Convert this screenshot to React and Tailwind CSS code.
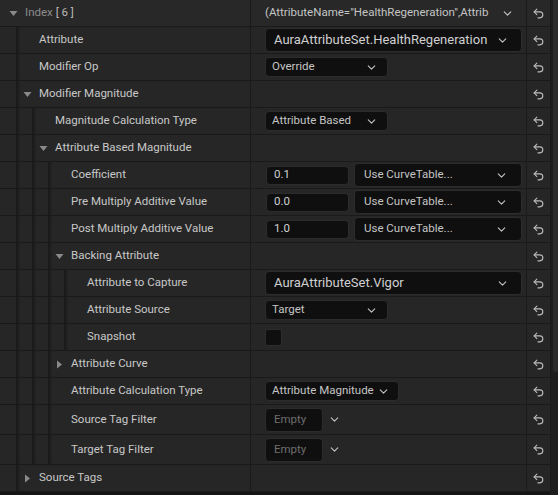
import React from 'react';
import { ChevronDown, Undo2 } from 'lucide-react';

const font = { fontFamily: 'Roboto, "Noto Sans", sans-serif' };

const rows = [
  { level: 0, label: 'Index', expand: 'down', value: 'struct', top: true },
  { level: 1, label: 'Attribute', value: 'bigcombo', text: 'AuraAttributeSet.HealthRegeneration' },
  { level: 1, label: 'Modifier Op', value: 'combo', text: 'Override' },
  { level: 1, label: 'Modifier Magnitude', expand: 'down' },
  { level: 2, label: 'Magnitude Calculation Type', value: 'combo', text: 'Attribute Based' },
  { level: 2, label: 'Attribute Based Magnitude', expand: 'down' },
  { level: 3, label: 'Coefficient', value: 'curve', text: '0.1' },
  { level: 3, label: 'Pre Multiply Additive Value', value: 'curve', text: '0.0' },
  { level: 3, label: 'Post Multiply Additive Value', value: 'curve', text: '1.0' },
  { level: 3, label: 'Backing Attribute', expand: 'down' },
  { level: 4, label: 'Attribute to Capture', value: 'bigcombo', text: 'AuraAttributeSet.Vigor' },
  { level: 4, label: 'Attribute Source', value: 'combo', text: 'Target' },
  { level: 4, label: 'Snapshot', value: 'check' },
  { level: 3, label: 'Attribute Curve', expand: 'right' },
  { level: 3, label: 'Attribute Calculation Type', value: 'combo', text: 'Attribute Magnitude', wide: true },
  { level: 3, label: 'Source Tag Filter', value: 'tags', tall: true },
  { level: 3, label: 'Target Tag Filter', value: 'tags', tall: true },
  { level: 1, label: 'Source Tags', expand: 'right' },
];

const Triangle = ({ dir }) => (
  <svg width="9" height="9" viewBox="0 0 9 9" className="shrink-0">
    {dir === 'down' ? (
      <polygon points="0.5,2 8.5,2 4.5,7" fill="#8a8a8a" />
    ) : (
      <polygon points="2,0.5 7,4.5 2,8.5" fill="#8a8a8a" />
    )}
  </svg>
);

const Combo = ({ text, w, h = 'h-[20px]', pad = 'pl-[6px] pr-[9px]', gap }) => (
  <div
    className={`flex items-center ${w} ${h} ${pad} rounded-[4px] border border-[#2c2c2c] bg-[#0f0f0f] text-[11.5px] text-[#c4c4c4]`}
  >
    <span className={gap ? 'mr-[3px] whitespace-nowrap' : 'flex-1 truncate'}>{text}</span>
    <ChevronDown size={13} strokeWidth={2} color="#c4c4c4" className="shrink-0" />
  </div>
);

const Value = ({ row }) => {
  switch (row.value) {
    case 'struct':
      return (
        <div className="flex flex-1 items-center pr-[12px] text-[11.5px] text-[#c4c4c4]">
          <span className="whitespace-nowrap">(AttributeName="HealthRegeneration",Attrib</span>
          <span className="flex-1" />
          <ChevronDown size={13} strokeWidth={2} color="#c4c4c4" />
        </div>
      );
    case 'bigcombo':
      return (
        <div className="flex h-[24px] w-[257px] items-center rounded-[4px] border border-[#2c2c2c] bg-[#0f0f0f] pl-[8px] pr-[12px] text-[13px] text-[#d0d0d0]">
          <span className="flex-1 truncate">{row.text}</span>
          <ChevronDown size={13} strokeWidth={2} color="#c4c4c4" />
        </div>
      );
    case 'combo':
      return row.wide ? (
        <Combo text={row.text} w="w-[134px]" gap />
      ) : (
        <Combo text={row.text} w="w-[123px]" />
      );
    case 'curve':
      return (
        <div className="flex items-center gap-[5px]">
          <div className="ml-[1px] flex h-[19px] w-[83px] items-center rounded-[4px] border border-[#2c2c2c] bg-[#0f0f0f] pl-[7px] text-[11.5px] text-[#d0d0d0]">
            {row.text}
          </div>
          <Combo text="Use CurveTable..." w="w-[168px]" h="h-[24px]" pad="pl-[9px] pr-[13px]" />
        </div>
      );
    case 'check':
      return <div className="h-[17px] w-[17px] rounded-[3px] border border-[#2c2c2c] bg-[#0f0f0f]" />;
    case 'tags':
      return (
        <div className="flex items-center gap-[5px]">
          <div className="flex h-[24px] w-[58px] items-center rounded-[4px] border border-[#2c2c2c] bg-[#0f0f0f] pl-[8px] text-[11.5px] text-[#6e6e6e]">
            Empty
          </div>
          <ChevronDown size={13} strokeWidth={2} color="#c4c4c4" />
        </div>
      );
    default:
      return null;
  }
};

const Row = ({ row }) => {
  const indents = Array.from({ length: row.level });
  return (
    <div
      className={`flex ${row.tall ? 'h-[30px]' : 'h-[27px]'} border-b border-[#1a1a1a] ${
        row.top ? 'bg-[#282828]' : 'bg-[#262626]'
      }`}
    >
      <div className="flex w-[251px] border-r border-[#1a1a1a]">
        {indents.map((_, i) => (
          <div
            key={i}
            className={`w-[16px] shrink-0 ${
              i > 0 ? 'border-l border-[#1b1b1b] shadow-[inset_3px_0_3px_-2px_rgba(0,0,0,0.45)]' : ''
            }`}
          />
        ))}
        <div
          className={`flex flex-1 items-center ${
            row.level > 0 ? 'border-l border-[#1b1b1b] shadow-[inset_3px_0_3px_-2px_rgba(0,0,0,0.45)]' : ''
          }`}
        >
          <div
            className={`flex shrink-0 justify-start ${
              row.top ? 'w-[25px] pl-[9px]' : 'w-[22px] pl-[6px]'
            }`}
          >
            {row.expand && <Triangle dir={row.expand} />}
          </div>
          {row.top ? (
            <span className="text-[11.5px] text-[#8c8c8c]">
              Index <span className="text-[#b8b8b8]">[ 6 ]</span>
            </span>
          ) : (
            <span className="whitespace-nowrap text-[11.5px] text-[#c8c8c8]">{row.label}</span>
          )}
        </div>
      </div>
      <div className="flex w-[276px] items-center border-r border-[#1a1a1a] pl-[14px]">
        <Value row={row} />
      </div>
      <div className="flex w-[23px] items-center justify-center">
        <Undo2 size={13} strokeWidth={2} color="#bdbdbd" />
      </div>
    </div>
  );
};

export default function App() {
  return (
    <div className="flex h-[495px] w-[558px] overflow-hidden bg-[#151515]" style={font}>
      <div className="flex w-[550px] flex-col">
        {rows.map((row, i) => (
          <Row key={i} row={row} />
        ))}
      </div>
      <div className="w-[8px] border-l border-[#1a1a1a] bg-[#1e1e1e]">
        <div className="ml-[2px] h-[372px] rounded-b-[3px] bg-[#2c2c2c]" />
      </div>
    </div>
  );
}
